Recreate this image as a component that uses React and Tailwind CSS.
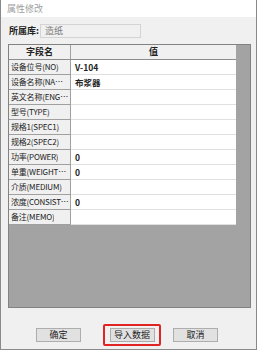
const rows = [
  ["设备位号(NO)", "V-104"],
  ["设备名称(NAME_CN)", "布浆器"],
  ["英文名称(ENGLISH)", ""],
  ["型号(TYPE)", ""],
  ["规格1(SPEC1)", ""],
  ["规格2(SPEC2)", ""],
  ["功率(POWER)", "0"],
  ["单重(WEIGHT_KG)", "0"],
  ["介质(MEDIUM)", ""],
  ["浓度(CONSISTENCY)", "0"],
  ["备注(MEMO)", ""],
];

function Button({ children }) {
  return (
    <div className="w-[45px] h-[14px] border border-[#adadad] bg-[#e1e1e1] flex items-center justify-center text-[9px] text-[#222]">
      {children}
    </div>
  );
}

export default function App() {
  return (
    <div
      className="w-[258px] h-[351px] bg-white overflow-hidden"
      style={{ fontFamily: '"Noto Sans CJK SC", "Liberation Sans", sans-serif' }}
    >
      <div className="w-[257px] h-[350px] border-l border-r border-b border-[#8a8a8a] flex flex-col">
        <div className="h-[17px] bg-white flex items-center px-[6px] text-[9px] text-[#a0a0a0]">
          属性修改
        </div>

        <div className="flex-1 bg-[#f0f0f0] flex flex-col">
          <div className="flex items-center h-[14px] mt-[7px] pl-[8px]">
            <span className="text-[9px] font-semibold text-[#222] w-[31px]">所属库:</span>
            <div className="w-[101px] h-[14px] border border-[#d4d4d4] bg-[#f0f0f0] flex items-center pl-[4px] text-[9px] text-[#777]">
              造纸
            </div>
          </div>

          <div className="ml-[7px] mt-[6px] w-[243px] h-[264px] bg-[#a3a3a3] border border-[#828282]">
            <div className="flex h-[15px] bg-[#f0f0f0] border-b border-[#8c8c8c] w-[227px]">
              <div className="w-[62px] border-r border-[#a0a0a0] flex items-center justify-center text-[9px] font-semibold text-[#222]">
                字段名
              </div>
              <div className="flex-1 flex items-center justify-center text-[9px] font-semibold text-[#222]">
                值
              </div>
            </div>
            {rows.map(([k, v]) => (
              <div key={k} className="flex h-[15px] w-[227px]">
                <div className="w-[62px] min-w-0 bg-[#f0f0f0] border-r border-b border-[#a0a0a0] flex items-center pl-[2px] pr-[1px] text-[8px] tracking-[-0.2px] text-[#222] overflow-hidden">
                  <span className="truncate min-w-0">{k}</span>
                </div>
                <div className="flex-1 bg-white border-b border-[#e0e0e0] flex items-center pl-[4px] text-[8.5px] font-semibold text-[#222]">
                  {v}
                </div>
              </div>
            ))}
          </div>

          <div className="flex items-center mt-[16px] pl-[35px]">
            <Button>确定</Button>
            <div className="ml-[22px] w-[58px] h-[22px] border-2 border-[#e02424] rounded-[2px] flex items-center justify-center">
              <Button>导入数据</Button>
            </div>
            <div className="ml-[12px]">
              <Button>取消</Button>
            </div>
          </div>
        </div>
      </div>
    </div>
  );
}
